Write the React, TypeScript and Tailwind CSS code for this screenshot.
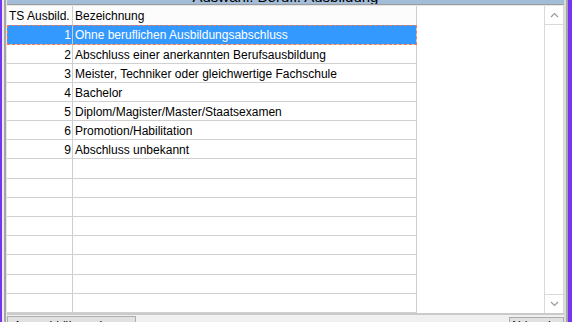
import React from 'react';

const rows: { nr: string; text: string }[] = [
  { nr: '1', text: 'Ohne beruflichen Ausbildungsabschluss' },
  { nr: '2', text: 'Abschluss einer anerkannten Berufsausbildung' },
  { nr: '3', text: 'Meister, Techniker oder gleichwertige Fachschule' },
  { nr: '4', text: 'Bachelor' },
  { nr: '5', text: 'Diplom/Magister/Master/Staatsexamen' },
  { nr: '6', text: 'Promotion/Habilitation' },
  { nr: '9', text: 'Abschluss unbekannt' },
];

// row heights incl. bottom grid line (the dialog is DPI-scaled, so pitch is ~19.2px)
const heights = ['h-[20px]', 'h-[19px]', 'h-[19px]', 'h-[19px]', 'h-[19px]', 'h-[19px]', 'h-[19px]', 'h-[20px]', 'h-[19px]', 'h-[19px]', 'h-[19px]', 'h-[19px]', 'h-[20px]', 'h-[19px]', 'h-[19px]'];

const Chevron = ({ up }: { up?: boolean }) => (
  <svg width="9" height="6" viewBox="0 0 9 6">
    <polyline
      points={up ? '1,5 4.5,1.5 8,5' : '1,1 4.5,4.5 8,1'}
      fill="none"
      stroke="#9a9a9a"
      strokeWidth="1.2"
    />
  </svg>
);

export default function App() {
  return (
    <div className="flex h-[322px] w-[572px] overflow-hidden bg-white font-['Liberation_Sans',Arial,sans-serif] text-[12px] text-black">
      {/* left frame */}
      <div className="w-[2px] shrink-0 bg-[#7434f2]" />
      <div className="w-[2px] shrink-0 bg-[#ececec]" />
      <div className="w-[2px] shrink-0 bg-[#a6a6a6]" />
      <div className="w-[1px] shrink-0 bg-[#e4e4e4]" />

      <div className="flex h-[322px] w-[557px] shrink-0 flex-col overflow-hidden">
        {/* caption, mostly scrolled off */}
        <div className="h-[4px] shrink-0 overflow-hidden bg-[#a3bdd9]">
          <div className="-mt-[11px] text-center text-[15px] leading-[15px]">Auswahl: Berufl. Ausbildung</div>
        </div>
        <div className="h-[1px] shrink-0 bg-[#9c9c9c]" />
        <div className="h-[1px] shrink-0 bg-[#e6e6e6]" />

        <div className="flex h-[307px] shrink-0">
          {/* grid */}
          <div className="flex w-[410px] flex-col">
            <div className="flex h-[19px] shrink-0 items-center bg-[#fcfcfc]">
              <div className="flex h-full w-[66px] items-center border-r border-[#cdcdcd] pl-[2px] pt-[1px]">TS Ausbild.</div>
              <div className="flex h-full w-[344px] items-center border-r border-[#cdcdcd] pl-[2px] pt-[1px]">Bezeichnung</div>
            </div>
            {heights.map((h, i) => {
              const row = rows[i];
              const sel = i === 0;
              return (
                <div
                  key={i}
                  className={`flex shrink-0 ${h} border-b border-[#d0d0d0] ${
                    sel ? 'bg-[#3399ff] text-white outline-1 -outline-offset-1 outline-dashed outline-[#f2785a]' : ''
                  }`}
                >
                  <div className="flex h-full w-[66px] items-center justify-end border-r border-[#cdcdcd] pr-[1px] pt-[1px]">
                    {row?.nr}
                  </div>
                  <div className="flex h-full w-[344px] items-center border-r border-[#cdcdcd] pl-[2px] pt-[1px]">
                    {row?.text}
                  </div>
                </div>
              );
            })}
          </div>

          <div className="flex-1" />

          {/* vertical scrollbar */}
          <div className="flex w-[20px] flex-col border-x border-[#d9d9d9]">
            <div className="flex h-[19px] shrink-0 items-center justify-center border-b border-[#d9d9d9]">
              <Chevron up />
            </div>
            <div className="flex-1" />
            <div className="flex h-[19px] shrink-0 items-center justify-center border-t border-[#d9d9d9]">
              <Chevron />
            </div>
          </div>
        </div>

        <div className="h-[2px] shrink-0 bg-[#cacaca]" />

        {/* button bar, cut off */}
        <div className="flex h-[7px] shrink-0 items-start overflow-hidden bg-[#f0f0f0] pt-[1px]">
          <div className="h-[14px] w-[129px] shrink-0 border border-[#adadad] bg-[#e1e1e1] pt-[2px] text-center leading-[14px]">
            Auswahl übernehmen
          </div>
          <div className="ml-auto mt-[1px] h-[14px] w-[55px] shrink-0 border border-[#adadad] bg-[#e1e1e1] pt-[1px] text-center leading-[14px]">
            Abbrechen
          </div>
        </div>
      </div>

      {/* right frame */}
      <div className="w-[2px] shrink-0 bg-[#dcdcdc]" />
      <div className="w-[2px] shrink-0 bg-[#a6a6a6]" />
      <div className="w-[4px] shrink-0 bg-[#7434f2]" />
    </div>
  );
}
